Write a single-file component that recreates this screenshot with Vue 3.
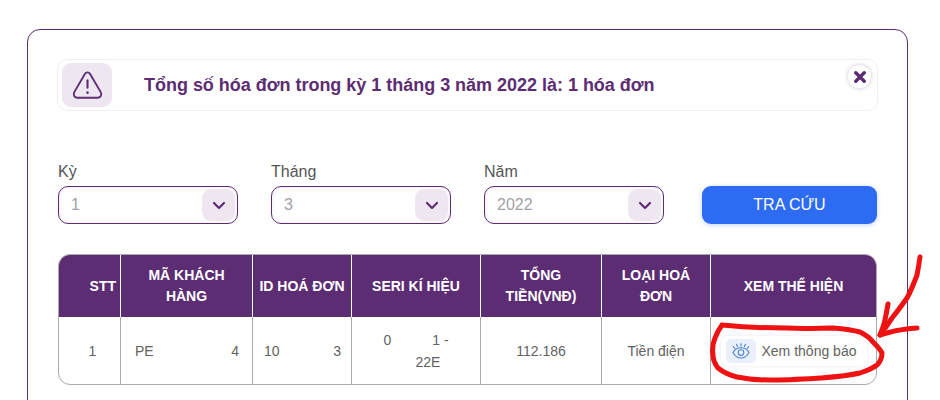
<template>
  <main class="page">
    <section class="card">
      <div class="alert">
        <span class="alert-icon">
          <svg width="33" height="30" viewBox="0 0 34 32" fill="none" stroke="#5c2d73" stroke-width="2" stroke-linecap="round" stroke-linejoin="round">
            <path d="M14.2 4.200 2.900 23.600c-1.600 2.800.3 6 3.400 6h21.400c3.100 0 5-3.200 3.400-6L19.800 4.200c-1.300-2.200-4.300-2.200-5.600 0Z" />
            <path d="M17 11v8" stroke-width="2.200" />
            <path d="M17 24v.2" stroke-width="2.600" />
          </svg>
        </span>
        <h1>Tổng số hóa đơn trong kỳ 1 tháng 3 năm 2022 là: 1 hóa đơn</h1>
        <button class="close" type="button" aria-label="Đóng">
          <svg width="12" height="12" viewBox="0 0 12 12" stroke="#5c2d73" stroke-width="3.400" stroke-linecap="round">
            <path d="M1.800 1.800l8.400 8.400M10.200 1.800l-8.400 8.400" />
          </svg>
        </button>
      </div>

      <form class="filters" @submit.prevent>
        <div v-for="field in fields" :key="field.label" class="field">
          <label>{{ field.label }}</label>
          <div class="select">
            <span>{{ field.value }}</span>
            <span class="select-arrow">
              <svg width="14" height="9" viewBox="0 0 14 9" fill="none" stroke="#5c2d73" stroke-width="2.200" stroke-linecap="round" stroke-linejoin="round">
                <path d="M2 2l5 5 5-5" />
              </svg>
            </span>
          </div>
        </div>
        <button class="search" type="submit">TRA CỨU</button>
      </form>

      <div class="table">
        <div v-for="col in columns" :key="col" class="th">{{ col }}</div>
        <div class="td td-stt">1</div>
        <div class="td td-left"><span>PE</span><span>4</span></div>
        <div class="td td-left td-id"><span>10</span><span>3</span></div>
        <div class="td td-seri"><span class="seri-line"><span>0</span><span>1 -</span></span><span class="seri-end">22E</span></div>
        <div class="td">112.186</div>
        <div class="td">Tiền điện</div>
        <div class="td">
          <a class="view" href="#">
            <span class="view-icon">
              <svg width="20" height="18" viewBox="0 0 20 18" fill="none" stroke="#4a7fd0" stroke-width="1.100" stroke-linecap="round" stroke-linejoin="round">
                <path d="M2 10.500C4 7 7 5.800 10 5.800s6 1.200 8 4.700c-2 3.800-5 5.500-8 5.500s-6-1.700-8-5.500Z" />
                <circle cx="10" cy="10.600" r="2.800" />
                <path d="M10 1.500v2.500M5.500 2.200l1 2.300M14.500 2.200l-1 2.300M2.200 4.500l1.600 1.800M17.800 4.500l-1.600 1.800" />
              </svg>
            </span>
            Xem thông báo
          </a>
        </div>
      </div>
    </section>

    <!-- hand drawn red marks on top of the screenshot -->
    <svg class="marks" width="940" height="400" viewBox="0 0 940 400" fill="none" stroke="#ee1212" stroke-width="5" stroke-linecap="round" stroke-linejoin="round">
      <path d="M722 325C742 327 765 328 787 328C805 329 820 328 833 328C845 329 853 330 860 332C866 335 870 338 873 342C877 346 880 349 882 353C882 358 880 362 877 365C872 369 866 371 860 373C847 376 833 377 820 378C803 379 787 380 770 380C758 380 747 379 737 377C729 375 723 372 718 368C715 364 713 360 713 355C712 349 713 343 715 338C717 333 719 329 722 325" />
      <path d="M920 257C919 264 918 270 917 275C914 283 911 291 907 298C902 305 897 312 892 318C888 324 884 330 880 335" />
      <path d="M888 304C887 310 886 315 885 320C884 325 882 330 880 335C887 333 893 331 900 330C906 329 911 328 917 328" />
    </svg>
  </main>
</template>

<script setup>
const fields = [
  { label: "Kỳ", value: "1" },
  { label: "Tháng", value: "3" },
  { label: "Năm", value: "2022" },
];

const columns = [
  "STT",
  "MÃ KHÁCH HÀNG",
  "ID HOÁ ĐƠN",
  "SERI KÍ HIỆU",
  "TỔNG TIỀN(VNĐ)",
  "LOẠI HOÁ ĐƠN",
  "XEM THỂ HIỆN",
];
</script>

<style>
html,
body {
  margin: 0;
  height: 400px;
  overflow: hidden;
  background: #fff;
}
</style>

<style scoped>
.page {
  position: relative;
  width: 940px;
  height: 400px;
  padding: 29px 32px 0 27px;
  box-sizing: border-box;
  overflow: hidden;
  font-family: "Liberation Sans", Arial, sans-serif;
}

.card {
  height: 420px;
  box-sizing: border-box;
  padding: 29px 29px 0 29px;
  border: 1px solid #5c2d73;
  border-radius: 13px;
}

.alert {
  display: flex;
  align-items: center;
  position: relative;
  height: 52px;
  padding: 0 4px;
  box-sizing: border-box;
  border: 1px solid #f1eff3;
  border-radius: 10px;
}

.alert-icon {
  display: flex;
  align-items: center;
  justify-content: center;
  width: 50px;
  height: 44px;
  background: #eee7f1;
  border-radius: 9px;
}

.alert h1 {
  margin: 0 0 0 32px;
  font-size: 18px;
  font-weight: 700;
  letter-spacing: -0.02px;
  color: #5c2d73;
}

.close {
  position: absolute;
  right: 6px;
  top: 5px;
  display: flex;
  align-items: center;
  justify-content: center;
  width: 23px;
  height: 23px;
  padding: 0;
  border: 0;
  border-radius: 50%;
  background: #fff;
  box-shadow: 0 0 4px rgba(92, 45, 115, 0.3);
}

.filters {
  display: flex;
  align-items: flex-end;
  margin-top: 52px;
  padding: 0 1px;
}

.field {
  display: flex;
  flex-direction: column;
  width: 180px;
  margin-right: 33px;
}

.field label {
  font-size: 16px;
  line-height: 18px;
  margin-bottom: 5px;
  color: #555;
}

.select {
  display: flex;
  align-items: center;
  justify-content: space-between;
  height: 38px;
  padding: 2px 2px 2px 12px;
  box-sizing: border-box;
  border: 1px solid #5c2d73;
  border-radius: 10px;
  background: #fff;
  box-shadow: inset 0 0 4px rgba(92, 45, 115, 0.12);
  font-size: 16px;
  color: #a5a0a8;
}

.select-arrow {
  display: flex;
  align-items: center;
  justify-content: center;
  width: 33px;
  height: 32px;
  background: #eee7f1;
  border-radius: 9px;
}

.search {
  width: 175px;
  height: 38px;
  margin-left: 5px;
  border: 0;
  border-radius: 9px;
  background: #2d6bf3;
  box-shadow: 0 1px 5px rgba(45, 107, 243, 0.3);
  color: #fff;
  font-family: inherit;
  font-size: 16px;
}

.table {
  display: grid;
  grid-template-columns: 61px 132px 99px 129px 121px 109px 166px;
  grid-template-rows: 62px 67px;
  width: 819px;
  margin-top: 30px;
  margin-left: 1px;
  box-sizing: border-box;
  border: 1px solid #aaa;
  border-radius: 12px;
  overflow: hidden;
}

.th {
  display: flex;
  align-items: center;
  justify-content: center;
  padding: 0 4px;
  background: #5c2d73;
  border-left: 1px solid #fff;
  color: #fff;
  font-size: 14px;
  font-weight: 700;
  line-height: 21px;
  text-align: center;
}

.th:first-child {
  border-left: 0;
  justify-content: flex-end;
}

.th:nth-child(2) {
  padding: 0 14px;
}

.td {
  display: flex;
  align-items: center;
  justify-content: center;
  padding-top: 1px;
  border-left: 1px solid #aaa;
  color: #626262;
  font-size: 14px;
}

.td-stt {
  border-left: 0;
  padding-left: 6px;
}

.td-left {
  justify-content: space-between;
  padding: 1px 13px 0 14px;
}

.td-id {
  padding: 1px 10px 0 11px;
}

.td-seri {
  flex-direction: column;
  line-height: 22px;
}

.seri-line {
  display: flex;
  gap: 41px;
}

.seri-end {
  margin-left: 24px;
}

.view {
  display: flex;
  align-items: center;
  width: 146px;
  height: 30px;
  box-sizing: border-box;
  padding-left: 5px;
  border-radius: 6px;
  box-shadow: 0 0 3px rgba(92, 45, 115, 0.12);
  color: #626262;
  font-size: 14px;
  text-decoration: none;
}

.view-icon {
  display: flex;
  align-items: center;
  justify-content: center;
  width: 30px;
  height: 24px;
  margin-right: 6px;
  background: #e9f0fb;
  border-radius: 5px;
}

.marks {
  position: absolute;
  left: 0;
  top: 0;
  pointer-events: none;
}
</style>
